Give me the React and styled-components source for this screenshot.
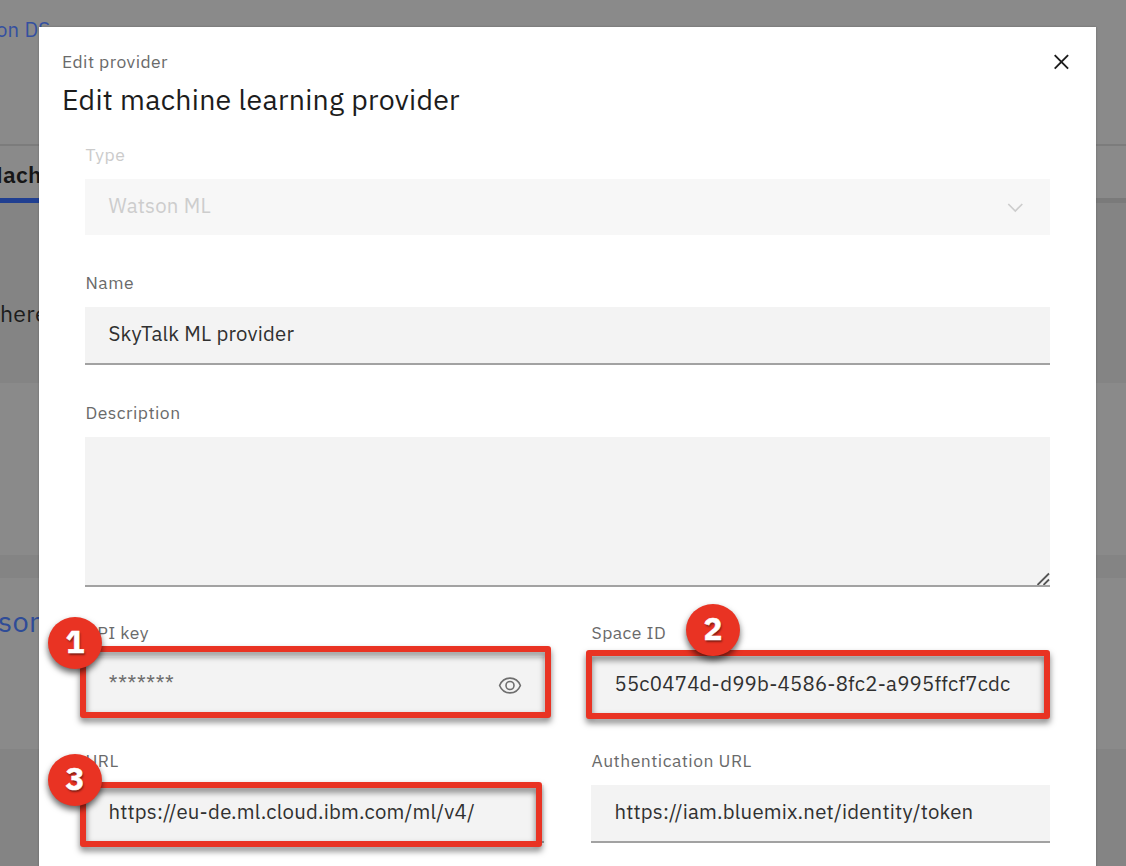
import React from "react";
import styled, { createGlobalStyle } from "styled-components";

const GlobalStyle = createGlobalStyle`
  * { box-sizing: border-box; }
  html, body, #root { height: 100%; }
  body {
    margin: 0;
    overflow: hidden;
    background: #8a8a8a;
    font-family: "IBM Plex Sans", Roboto, "Liberation Sans", sans-serif;
    color: #262626;
  }
`;

const Screen = styled.div`
  position: relative;
  height: 866px;
  overflow: hidden;
`;

const Backdrop = styled.div`
  display: flex;
  flex-direction: column;
  height: 866px;
  white-space: nowrap;
`;

const Breadcrumb = styled.div`
  height: 146px;
  padding-top: 18px;
  border-bottom: 2px solid #7c7c7c;
  color: #3450a0;
  font-size: 20.4px;
  line-height: 24px;
  letter-spacing: 0.2px;
`;

const TabBar = styled.div`
  display: flex;
  height: 57px;
  border-bottom: 5px solid #7a7a7a;
`;

const Tab = styled.div`
  width: 200px;
  height: 57px;
  padding-top: 14px;
  border-bottom: 5px solid #203f91;
  color: #161616;
  font-size: 23px;
  font-weight: 600;
  line-height: 28px;
  letter-spacing: 0.2px;
`;

const Band = styled.div`
  height: ${(p) => p.$h}px;
  padding-top: ${(p) => p.$top || 0}px;
  background: ${(p) => (p.$dark ? "#848484" : "#8a8a8a")};
  color: ${(p) => p.$color || "#1c1c1c"};
  font-size: ${(p) => p.$size || 23}px;
  line-height: 30px;
  letter-spacing: 0.3px;
`;

const Shift = styled.span`
  margin-left: ${(p) => p.$x}px;
`;

const Modal = styled.section`
  position: absolute;
  left: 39px;
  top: 27px;
  width: 1057px;
  height: 850px;
  padding: 23px 46px 0;
  background: #fff;
  box-shadow: 0 0 2px rgba(0, 0, 0, 0.25);
`;

const Header = styled.header`
  display: flex;
  justify-content: space-between;
  height: 93px;
  margin: 0 -23px;
`;

const Eyebrow = styled.div`
  color: #6a6a6a;
  font-size: 17.5px;
  line-height: 24px;
  letter-spacing: 0.45px;
`;

const Title = styled.h1`
  margin: 7px 0 0;
  color: #1c1c1c;
  font-size: 28.5px;
  font-weight: 400;
  line-height: 38px;
  letter-spacing: 0.27px;
`;

const CloseButton = styled.button`
  width: 24px;
  height: 24px;
  padding: 0;
  border: 0;
  background: none;
`;

const Form = styled.div`
  display: flex;
  flex-direction: column;
  width: 965px;
`;

const Columns = styled.div`
  display: grid;
  grid-template-columns: 459px 459px;
  justify-content: space-between;
`;

const Field = styled.label`
  display: block;
  margin-bottom: ${(p) => p.$gap}px;
`;

const Label = styled.div`
  height: 36px;
  padding-left: 0.5px;
  color: ${(p) => (p.$disabled ? "#cbcbcb" : "#6a6a6a")};
  font-size: 17.5px;
  line-height: 24px;
  letter-spacing: 0.48px;
`;

const Control = styled.div`
  display: flex;
  align-items: center;
  justify-content: space-between;
  height: ${(p) => p.$h || 58}px;
  padding: 0 22px 3px 23.5px;
  background: ${(p) => (p.$disabled ? "#f7f7f7" : "#f3f3f3")};
  border-bottom: ${(p) => (p.$disabled ? "0" : "2px solid #a2a2a2")};
  color: ${(p) => (p.$disabled ? "#cdcdcd" : "#303030")};
  font-size: 20.4px;
  letter-spacing: 0.2px;
  white-space: nowrap;
`;

const TextArea = styled(Control)`
  align-items: flex-end;
  justify-content: flex-end;
  padding: 0;
`;

const Secret = styled.span`
  padding-bottom: 2px;
  color: #6e6e6e;
`;

const Highlight = styled.div`
  position: absolute;
  left: ${(p) => p.$x}px;
  top: ${(p) => p.$y}px;
  width: ${(p) => p.$w}px;
  height: ${(p) => p.$h}px;
  border: 6px solid #e93323;
  border-radius: 3px;
  filter: drop-shadow(0 4px 3px rgba(0, 0, 0, 0.5));
`;

const Badge = styled.div`
  position: absolute;
  left: ${(p) => p.$x}px;
  top: ${(p) => p.$y}px;
  display: flex;
  align-items: center;
  justify-content: center;
  width: 54px;
  height: 52px;
  padding-bottom: 2px;
  border-radius: 50%;
  background: #e93323;
  box-shadow: 0 4px 6px rgba(0, 0, 0, 0.6);
  color: #fff;
  font-size: 31.5px;
  font-weight: 700;
  line-height: 52px;
  text-shadow: 1px 2px 2px rgba(0, 0, 0, 0.45);
  -webkit-text-stroke: 0.5px #fff;
`;

const CloseIcon = () => (
  <svg width="24" height="24" viewBox="0 0 24 24" fill="none" stroke="#1c1c1c" strokeWidth="1.9">
    <path d="M5.700 5.200 19.100 18.600M19.100 5.200 5.700 18.600" />
  </svg>
);

const ChevronIcon = () => (
  <svg width="22" height="22" viewBox="0 0 22 22" fill="none" stroke="#cdcdcd" strokeWidth="1.7">
    <path d="m2.300 9 7 7 7-7" />
  </svg>
);

const EyeIcon = () => (
  <svg width="24" height="24" viewBox="0 0 24 24" fill="none" stroke="#6e6e6e" strokeWidth="1.6">
    <path d="M1.600 13.500C3.500 8.800 7.400 6.100 12 6.100S20.500 8.800 22.400 13.500C20.500 18.200 16.600 20.900 12 20.900S3.500 18.200 1.600 13.500Z" />
    <circle cx="12" cy="13.5" r="4" />
  </svg>
);

const ResizeIcon = () => (
  <svg width="14" height="14" viewBox="0 0 14 14" fill="none" stroke="#555" strokeWidth="1.8">
    <path d="M1.500 14 13 2.500M7.500 14 13 8.500" />
  </svg>
);

export default function App() {
  return (
    <Screen>
      <GlobalStyle />
      <Backdrop>
        <Breadcrumb><Shift $x={-4}>on DS</Shift></Breadcrumb>
        <TabBar><Tab><Shift $x={-16}>Machine</Shift></Tab></TabBar>
        <Band $h={180} $top={95} $dark><Shift $x={0}>here</Shift></Band>
        <Band $h={172} />
        <Band $h={23} $dark />
        <Band $h={171} $top={28} $size={29} $color="#2f4c97"><Shift $x={-2}>son</Shift></Band>
        <Band $h={117} $dark />
      </Backdrop>

      <Modal>
        <Header>
          <div>
            <Eyebrow>Edit provider</Eyebrow>
            <Title>Edit machine learning provider</Title>
          </div>
          <CloseButton aria-label="Close"><CloseIcon /></CloseButton>
        </Header>
        <Form>
          <Field $gap={36}>
            <Label $disabled>Type</Label>
            <Control $disabled $h={56}>Watson ML<ChevronIcon /></Control>
          </Field>
          <Field $gap={36}>
            <Label>Name</Label>
            <Control>SkyTalk ML provider</Control>
          </Field>
          <Field $gap={34}>
            <Label>Description</Label>
            <TextArea $h={150}><ResizeIcon /></TextArea>
          </Field>
          <Columns>
            <Field $gap={34}>
              <Label>API key</Label>
              <Control><Secret>*******</Secret><EyeIcon /></Control>
            </Field>
            <Field $gap={34}>
              <Label>Space ID</Label>
              <Control>55c0474d-d99b-4586-8fc2-a995ffcf7cdc</Control>
            </Field>
            <Field $gap={0}>
              <Label>URL</Label>
              <Control>https://eu-de.ml.cloud.ibm.com/ml/v4/</Control>
            </Field>
            <Field $gap={0}>
              <Label>Authentication URL</Label>
              <Control>https://iam.bluemix.net/identity/token</Control>
            </Field>
          </Columns>
        </Form>
      </Modal>

      <Highlight $x={80} $y={645.5} $w={470.5} $h={72.5} />
      <Highlight $x={585.5} $y={650} $w={464.5} $h={69} />
      <Highlight $x={80} $y={782} $w={462} $h={64.5} />
      <Badge $x={48} $y={617}>1</Badge>
      <Badge $x={686} $y={604}>2</Badge>
      <Badge $x={48} $y={754}>3</Badge>
    </Screen>
  );
}
